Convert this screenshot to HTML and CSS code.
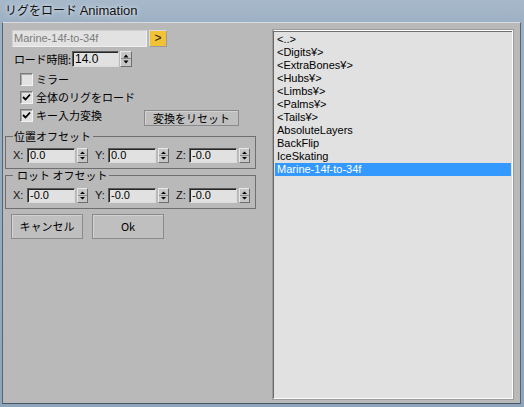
FILE: index.html
```html
<!DOCTYPE html>
<html lang="ja">
<head>
<meta charset="utf-8">
<title>リグをロード Animation</title>
<link rel="stylesheet" href="styles.css">
</head>
<body>
<div class="window">
  <div class="titlebar"><span class="title">リグをロード <span class="latin">Animation</span></span></div>
  <div class="client">
    <div class="left">
      <div class="name-row">
        <div class="namefield">Marine-14f-to-34f</div>
        <div class="pick">&gt;</div>
      </div>
      <div class="time-row">
        <span class="time-label">ロード時間:</span>
        <div class="field time-field">14.0</div>
        <div class="spin"><svg width="10" height="14" viewBox="0 0 10 14"><path d="M2.5 5.5h5L5 2.5z M2.5 8.5h5L5 11.5z" fill="#000"/></svg></div>
      </div>
      <label class="chk-row first"><span class="box"></span><span>ミラー</span></label>
      <label class="chk-row"><span class="box"><svg width="11" height="11" viewBox="0 0 11 11"><path d="M2 5l2.5 2.5L9 2.5" fill="none" stroke="#000" stroke-width="1.8"/></svg></span><span>全体のリグをロード</span></label>
      <div class="key-row">
        <label class="chk-row key-chk"><span class="box"><svg width="11" height="11" viewBox="0 0 11 11"><path d="M2 5l2.5 2.5L9 2.5" fill="none" stroke="#000" stroke-width="1.8"/></svg></span><span>キー入力変換</span></label>
        <div class="btn reset">変換をリセット</div>
      </div>
      <fieldset class="group g1">
        <legend>位置オフセット</legend>
        <div class="xyz">
          <div class="axis"><span class="ax">X:</span><div class="field">0.0</div><div class="spin sm"><svg width="9" height="13" viewBox="0 0 9 13"><path d="M2 5h5L4.5 2.5z M2 8h5L4.5 10.5z" fill="#000"/></svg></div></div>
          <div class="axis"><span class="ax">Y:</span><div class="field">0.0</div><div class="spin sm"><svg width="9" height="13" viewBox="0 0 9 13"><path d="M2 5h5L4.5 2.5z M2 8h5L4.5 10.5z" fill="#000"/></svg></div></div>
          <div class="axis"><span class="ax">Z:</span><div class="field">-0.0</div><div class="spin sm"><svg width="9" height="13" viewBox="0 0 9 13"><path d="M2 5h5L4.5 2.5z M2 8h5L4.5 10.5z" fill="#000"/></svg></div></div>
        </div>
      </fieldset>
      <fieldset class="group g2">
        <legend>ロット オフセット</legend>
        <div class="xyz">
          <div class="axis"><span class="ax">X:</span><div class="field">-0.0</div><div class="spin sm"><svg width="9" height="13" viewBox="0 0 9 13"><path d="M2 5h5L4.5 2.5z M2 8h5L4.5 10.5z" fill="#000"/></svg></div></div>
          <div class="axis"><span class="ax">Y:</span><div class="field">-0.0</div><div class="spin sm"><svg width="9" height="13" viewBox="0 0 9 13"><path d="M2 5h5L4.5 2.5z M2 8h5L4.5 10.5z" fill="#000"/></svg></div></div>
          <div class="axis"><span class="ax">Z:</span><div class="field">-0.0</div><div class="spin sm"><svg width="9" height="13" viewBox="0 0 9 13"><path d="M2 5h5L4.5 2.5z M2 8h5L4.5 10.5z" fill="#000"/></svg></div></div>
        </div>
      </fieldset>
      <div class="actions">
        <div class="btn big">キャンセル</div>
        <div class="btn big">Ok</div>
      </div>
    </div>
    <div class="listbox">
      <div class="list-inner">
        <div class="item">&lt;..&gt;</div>
        <div class="item">&lt;Digits¥&gt;</div>
        <div class="item">&lt;ExtraBones¥&gt;</div>
        <div class="item">&lt;Hubs¥&gt;</div>
        <div class="item">&lt;Limbs¥&gt;</div>
        <div class="item">&lt;Palms¥&gt;</div>
        <div class="item">&lt;Tails¥&gt;</div>
        <div class="item">AbsoluteLayers</div>
        <div class="item">BackFlip</div>
        <div class="item">IceSkating</div>
        <div class="item selected">Marine-14f-to-34f</div>
      </div>
    </div>
  </div>
</div>
</body>
</html>
```

FILE: styles.css
```css
html, body {
  margin: 0;
  padding: 0;
}
body {
  width: 524px;
  height: 407px;
  overflow: hidden;
  background: #94a8bd;
  font-family: "Liberation Sans", "Noto Sans CJK JP", sans-serif;
  font-size: 11px;
  line-height: 13px;
  color: #000;
}
.window {
  width: 524px;
  height: 407px;
  display: flex;
  flex-direction: column;
  background: linear-gradient(to bottom, #a6b8ca 0, #9eb1c4 22px, #8fa5bb 100%);
}
.titlebar {
  height: 22px;
  flex: none;
  display: flex;
  align-items: center;
  padding-left: 5px;
}
.title {
  font-family: "Noto Sans CJK JP", "Liberation Sans", sans-serif;
  font-size: 12px;
  line-height: 16px;
  color: #111;
  text-shadow: 0 0 6px #dbe4ed, 0 0 3px #dbe4ed;
  margin-top: -1px;
}
.title .latin {
  font-family: "Liberation Sans", sans-serif;
  font-size: 13px;
}
.client {
  margin: 0 3px 0 2px;
  height: 382px;
  box-sizing: border-box;
  background: #b9b9b9;
  border-top: 1px solid #d9dde2;
  border-left: 1px solid #566474;
  border-right: 1px solid #566474;
  border-bottom: 1px solid #475564;
  display: flex;
}
.left {
  width: 269px;
  flex: none;
  padding-top: 7px;
  display: flex;
  flex-direction: column;
}
.name-row {
  display: flex;
  gap: 2px;
  margin-left: 9px;
  height: 17px;
}
.namefield {
  width: 135px;
  box-sizing: border-box;
  background: #e2e2e2;
  border: 1px solid #d0d0d0;
  border-right-color: #efefef;
  border-bottom-color: #efefef;
  color: #7c7c7c;
  padding-left: 1px;
  line-height: 15px;
  font-size: 11px;
}
.pick {
  width: 18px;
  box-sizing: border-box;
  background: #f2c236;
  border: 1px solid #dadada;
  border-right-color: #9a9a9a;
  border-bottom-color: #9a9a9a;
  text-align: center;
  line-height: 15px;
  font-size: 12px;
  color: #201a00;
}
.time-row {
  display: flex;
  align-items: center;
  margin-top: 4px;
  margin-left: 11px;
  height: 16px;
}
.time-label {
  flex: 0 0 58px;
  min-width: 0;
  white-space: nowrap;
  font-family: "Noto Sans CJK JP", sans-serif;
  font-size: 11px;
  letter-spacing: -0.2px;
}
.field {
  box-sizing: border-box;
  background: #e1e1e1;
  border: 1px solid;
  border-color: #5c5c5c #dcdcdc #dcdcdc #5c5c5c;
  box-shadow: inset 1px 1px 0 #262626;
  padding-left: 2px;
  font-size: 11px;
  line-height: 13px;
  height: 15px;
  width: 48px;
  color: #000;
}
.time-field {
  width: 47px;
  height: 16px;
  line-height: 14px;
  font-size: 12px;
}
.spin {
  margin-left: 1px;
  width: 12px;
  height: 16px;
  box-sizing: border-box;
  background: #c6c6c6;
  border: 1px solid;
  border-color: #e8e8e8 #6e6e6e #6e6e6e #e8e8e8;
  display: flex;
  align-items: center;
  justify-content: center;
  position: relative;
}
.spin svg { display: block; }
.spin::after {
  content: "";
  position: absolute;
  left: 0;
  right: 0;
  top: 50%;
  border-top: 1px solid #8a8a8a;
  margin-top: -1px;
}
.spin.sm {
  width: 11px;
  height: 15px;
  margin-left: 2px;
}
.chk-row {
  display: flex;
  align-items: center;
  margin-left: 17px;
  margin-top: 5px;
  height: 13px;
  font-family: "Noto Sans CJK JP", sans-serif;
  font-size: 11px;
  gap: 3px;
}
.chk-row.first { margin-top: 6px; }
.box {
  width: 13px;
  height: 13px;
  flex: none;
  box-sizing: border-box;
  background: #e2e2e2;
  border: 1px solid;
  border-color: #7c7c7c #f2f2f2 #f2f2f2 #7c7c7c;
  box-shadow: inset 1px 1px 0 #a8a8a8;
  display: flex;
  align-items: center;
  justify-content: center;
}
.box svg { display: block; }
.key-row {
  display: flex;
  margin-top: 5px;
  height: 17px;
}
.key-row .key-chk {
  margin-top: 0;
  width: 124px;
}
.btn {
  box-sizing: border-box;
  background: #bfbfbf;
  border: 1px solid #8a8a8a;
  box-shadow: inset 1px 1px 0 #d2d2d2;
  text-align: center;
  font-family: "Noto Sans CJK JP", "Liberation Sans", sans-serif;
  font-size: 11px;
  color: #000;
}
.reset {
  width: 95px;
  height: 16px;
  line-height: 14px;
  margin-top: 1px;
}
.group {
  margin: 4px 0 0 2px;
  width: 251px;
  box-sizing: border-box;
  border: 1px solid #6f6f6f;
  padding: 5px 6px 5px 7px;
  min-inline-size: 0;
}
.group.g2 {
  margin-top: 0;
  padding-top: 6px;
}
.group legend {
  padding: 0 2px 0 1px;
  font-family: "Noto Sans CJK JP", sans-serif;
  font-size: 11px;
  line-height: 13px;
}
.group.g2 legend {
  padding-left: 4px;
}
.xyz {
  display: flex;
  gap: 7px;
  height: 15px;
}
.axis {
  display: flex;
  align-items: center;
}
.ax {
  width: 14px;
  font-size: 11px;
  color: #111;
}
.axis + .axis .ax { width: 13px; }
.actions {
  display: flex;
  gap: 9px;
  margin: 5px 0 0 8px;
}
.btn.big {
  width: 72px;
  height: 25px;
  line-height: 23px;
}
.listbox {
  margin: 6px 6px 3px 0;
  flex: 1;
  box-sizing: border-box;
  border: 1px solid #9c9c9c;
  background: #e1e1e1;
  display: flex;
}
.list-inner {
  flex: 1;
  box-sizing: border-box;
  border: 1px solid #fdfdfd;
  border-left-color: #686868;
  box-shadow: inset 0 1px 0 #707070;
  padding: 2px 1px 0 1px;
}
.item {
  height: 13px;
  line-height: 13px;
  padding-left: 2px;
  font-size: 11px;
  white-space: nowrap;
  color: #000;
}
.item.selected {
  background: #3399ff;
  color: #fff;
}
```
